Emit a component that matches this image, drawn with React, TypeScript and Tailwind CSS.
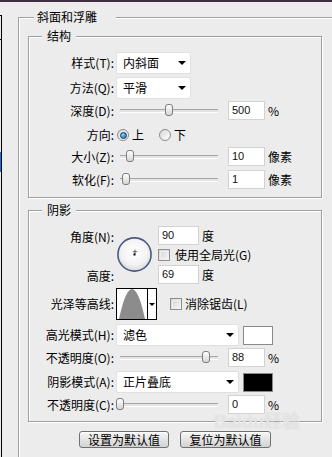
import React from "react";

const Label = ({ children }: { children: React.ReactNode }) => (
  <div className="w-[85px] shrink-0 text-right text-[12px] leading-[16px] text-black">{children}</div>
);

const Select = ({ text, cls }: { text: string; cls: string }) => (
  <div className={cls + " ml-[2px] h-[22px] flex items-center bg-white border border-[#e0e0e0] rounded-[2px] pl-[6px] pr-[4px]"}>
    <span className="text-[12px] leading-[16px] text-black">{text}</span>
    <span className="ml-auto w-0 h-0 border-x-[4px] border-t-[4px] border-x-transparent border-t-black" />
  </div>
);

const Slider = ({ thumb }: { thumb: string }) => (
  <div className="relative ml-[2px] w-[102px] h-[19px] shrink-0">
    <div className="absolute left-[4px] right-0 top-[8px] h-[3px] border-t border-[#a6a6a6] bg-[#e4e4e4] shadow-[0_1px_0_#ffffff]" />
    <div className={"absolute top-[3px] w-[8px] h-[12px] rounded-[3px] border border-[#7d7d7d] bg-gradient-to-b from-white to-[#d6d6d6] " + thumb} />
  </div>
);

const Input = ({ v, cls }: { v: string; cls: string }) => (
  <div className={cls + " h-[19px] shrink-0 bg-white border border-[#d2d2d2] pl-[3px] text-[11px] leading-[17px] font-['Liberation_Sans',Arial,sans-serif] text-[#111]"}>
    {v}
  </div>
);

const Unit = ({ t }: { t: string }) => (
  <span className="ml-[3px] text-[12px] leading-[16px] text-black">{t}</span>
);

const Radio = ({ on }: { on?: boolean }) => (
  <div className="w-[12px] h-[12px] shrink-0 rounded-full border border-[#8b8b8b] bg-gradient-to-br from-[#d8d8d8] to-white flex items-center justify-center">
    {on && (
      <div className="w-[7px] h-[7px] rounded-full border border-[#0c3d6e] bg-[radial-gradient(circle_at_35%_35%,#8fd0f7,#0f5fa6)]" />
    )}
  </div>
);

const Check = () => (
  <div className="w-[12px] h-[12px] shrink-0 border border-[#8e8f8f] bg-gradient-to-br from-[#d2d2d2] to-[#f7f7f7] p-[1px]">
    <div className="w-full h-full border border-[#efefef]" />
  </div>
);

const Group = ({
  title,
  cls,
  legendCls,
  children,
}: {
  title: string;
  cls: string;
  legendCls: string;
  children: React.ReactNode;
}) => (
  <div className={"relative shrink-0 border border-[#9f9f9f] shadow-[inset_1px_1px_0_#ffffff,1px_1px_0_#ffffff] " + cls}>
    <span className={"absolute top-[-9px] h-[16px] leading-[16px] text-[12px] text-black bg-[#ececec] " + legendCls}>{title}</span>
    {children}
  </div>
);

const Button = ({ t, cls }: { t: string; cls: string }) => (
  <div className={cls + " h-[17px] border border-[#707070] rounded-[3px] bg-gradient-to-b from-[#f7f7f7] to-[#d2d2d2] shadow-[inset_0_1px_0_#ffffff] flex items-center justify-center text-[12px] leading-[15px] text-black"}>
    {t}
  </div>
);

export default function App() {
  return (
    <div className="relative w-[332px] h-[457px] overflow-hidden bg-[#ececec] flex flex-col font-['Noto_Sans_CJK_SC',sans-serif]">
      <div className="h-[2px] shrink-0 bg-[#3f2e40]" />
      <div className="flex flex-1">
        {/* left strip */}
        <div className="w-[18px] shrink-0 flex">
          <div className="w-[1px] flex flex-col">
            <div className="h-[13px]" />
            <div className="h-[1px] bg-black" />
            <div className="h-[23px]" />
            <div className="h-[1px] bg-black" />
            <div className="h-[112px]" />
            <div className="h-[20px] bg-[#1874d8]" />
          </div>
          <div className="w-[1px] flex flex-col">
            <div className="h-[13px]" />
            <div className="flex-1 bg-black" />
          </div>
        </div>

        {/* outer group */}
        <Group title="斜面和浮雕" cls="mt-[15px] w-[320px] h-[450px] pl-[9px] pt-[18px]" legendCls="left-[15px] pl-[3px] pr-[19px]">
          <div className="flex flex-col">
            {/* 结构 */}
            <Group title="结构" cls="w-[294px] h-[162px] pt-[15px]" legendCls="left-[13px] pl-[5px] pr-[5px]">
              <div className="flex items-center h-[22px]">
                <Label>样式(T):</Label>
                <Select text="内斜面" cls="w-[75px]" />
              </div>
              <div className="flex items-center h-[22px] mt-[3px]">
                <Label>方法(Q):</Label>
                <Select text="平滑" cls="w-[75px]" />
              </div>
              <div className="flex items-center h-[19px] mt-[2px]">
                <Label>深度(D):</Label>
                <Slider thumb="left-[49px]" />
                <div className="ml-[10px]" />
                <Input v="500" cls="w-[37px]" />
                <Unit t="%" />
              </div>
              <div className="flex items-center h-[20px] mt-[5px]">
                <Label>方向:</Label>
                <div className="ml-[3px]" />
                <Radio on />
                <span className="ml-[3px] text-[12px] leading-[16px]">上</span>
                <div className="ml-[15px]" />
                <Radio />
                <span className="ml-[3px] text-[12px] leading-[16px]">下</span>
              </div>
              <div className="flex items-center h-[19px] mt-[2px]">
                <Label>大小(Z):</Label>
                <Slider thumb="left-[10px]" />
                <div className="ml-[10px]" />
                <Input v="10" cls="w-[37px]" />
                <Unit t="像素" />
              </div>
              <div className="flex items-center h-[19px] mt-[4px]">
                <Label>软化(F):</Label>
                <Slider thumb="left-[6px]" />
                <div className="ml-[10px]" />
                <Input v="1" cls="w-[37px]" />
                <Unit t="像素" />
              </div>
            </Group>

            {/* 阴影 */}
            <Group title="阴影" cls="mt-[12px] w-[294px] h-[212px] pt-[15px]" legendCls="left-[13px] pl-[5px] pr-[5px]">
              <div className="flex items-start">
                <div className="flex flex-col">
                  <div className="h-[22px] flex items-center">
                    <Label>角度(N):</Label>
                  </div>
                  <div className="h-[22px] mt-[17px] flex items-center">
                    <Label>高度:</Label>
                  </div>
                </div>
                <div className="ml-[3px] mt-[11px]">
                  <svg width="35" height="35" viewBox="0 0 35 35">
                    <defs>
                      <radialGradient id="dialg" cx="50%" cy="42%" r="60%">
                        <stop offset="0%" stopColor="#ffffff" />
                        <stop offset="65%" stopColor="#f3f3f3" />
                        <stop offset="100%" stopColor="#d5d5d5" />
                      </radialGradient>
                    </defs>
                    <circle cx="17.5" cy="17.5" r="16.6" fill="url(#dialg)" stroke="#4a5a83" strokeWidth="1.6" />
                    <path d="M18 12.5v4.5M15.8 14.7h4.4" stroke="#555" strokeWidth="0.9" />
                    <rect x="16.5" y="16.5" width="2" height="2" fill="#000" />
                  </svg>
                </div>
                <div className="ml-[6px] flex flex-col">
                  <div className="flex items-center h-[19px]">
                    <Input v="90" cls="w-[41px]" />
                    <Unit t="度" />
                  </div>
                  <div className="flex items-center h-[20px]">
                    <Check />
                    <span className="ml-[5px] text-[12px] leading-[16px]">使用全局光(G)</span>
                  </div>
                  <div className="flex items-center h-[19px]">
                    <Input v="69" cls="w-[41px]" />
                    <Unit t="度" />
                  </div>
                </div>
              </div>

              <div className="flex items-center h-[32px] mt-[1px]">
                <Label>光泽等高线:</Label>
                <div className="ml-[2px] flex h-[32px] border border-black bg-white">
                  <svg width="30" height="30" viewBox="0 0 30 30">
                    <path d="M2 30 Q15 -30 28 30Z" fill="#8c8c8c" />
                  </svg>
                  <div className="w-[9px] border-l border-black flex items-center justify-center">
                    <span className="w-0 h-0 border-x-[3px] border-t-[3px] border-x-transparent border-t-black" />
                  </div>
                </div>
                <div className="ml-[13px]" />
                <Check />
                <span className="ml-[3px] text-[12px] leading-[16px]">消除锯齿(L)</span>
              </div>

              <div className="flex items-center h-[22px] mt-[4px]">
                <Label>高光模式(H):</Label>
                <Select text="滤色" cls="w-[123px]" />
                <div className="ml-[4px] w-[30px] h-[19px] border border-[#8a8a8a] bg-white" />
              </div>
              <div className="flex items-center h-[19px] mt-[2px]">
                <Label>不透明度(O):</Label>
                <Slider thumb="left-[86px]" />
                <div className="ml-[10px]" />
                <Input v="88" cls="w-[37px]" />
                <Unit t="%" />
              </div>
              <div className="flex items-center h-[22px] mt-[4px]">
                <Label>阴影模式(A):</Label>
                <Select text="正片叠底" cls="w-[123px]" />
                <div className="ml-[4px] w-[30px] h-[19px] border border-[#8a8a8a] bg-black" />
              </div>
              <div className="flex items-center h-[19px] mt-[2px]">
                <Label>不透明度(C):</Label>
                <Slider thumb="left-[0px]" />
                <div className="ml-[10px]" />
                <Input v="0" cls="w-[37px]" />
                <Unit t="%" />
              </div>
            </Group>

            <div className="w-[294px] mt-[9px] flex justify-center gap-[11px]">
              <Button t="设置为默认值" cls="w-[90px]" />
              <Button t="复位为默认值" cls="w-[91px]" />
            </div>
          </div>
        </Group>
      </div>

      {/* watermark */}
      <div className="absolute left-[214px] top-[414px] text-[18px] leading-[16px] font-bold text-white/50 [text-shadow:0_0_1px_#c8c8c8] font-['Liberation_Sans','Noto_Sans_CJK_SC',sans-serif] pointer-events-none">
        Baidu经验
      </div>
    </div>
  );
}
